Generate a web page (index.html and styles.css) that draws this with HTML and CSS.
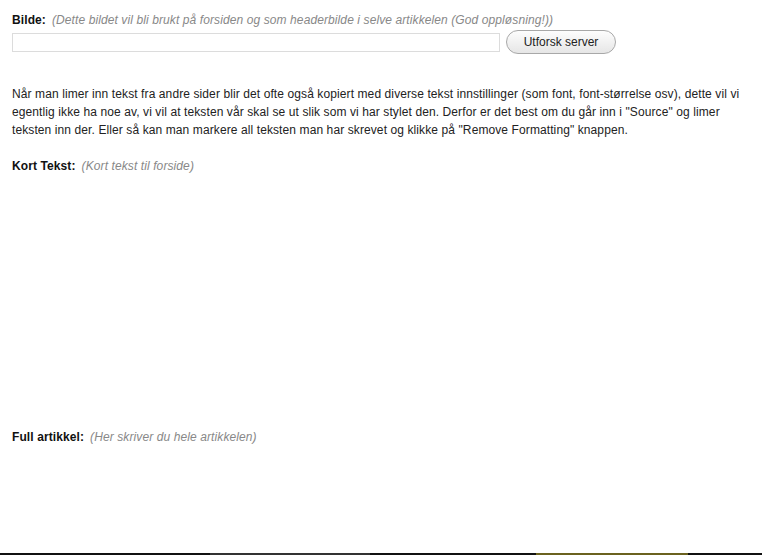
FILE: index.html
```html
<!DOCTYPE html>
<html lang="no">
<head>
  <meta charset="UTF-8" />
  <title>Ny artikkel</title>
  <link rel="stylesheet" href="styles.css">
</head>
<body>
  <form class="article-form">
    <div class="field">
      <div class="label-row">
        <span class="label">Bilde:</span>
        <span class="hint">(Dette bildet vil bli brukt på forsiden og som headerbilde i selve artikkelen (God oppløsning!))</span>
      </div>
      <div class="image-row">
        <input type="text" class="image-input" name="bilde" />
        <button type="button" class="browse-btn">Utforsk server</button>
      </div>
    </div>

    <p class="info">Når man limer inn tekst fra andre sider blir det ofte også kopiert med diverse tekst innstillinger (som font, font-størrelse osv), dette vil vi egentlig ikke ha noe av, vi vil at teksten vår skal se ut slik som vi har stylet den. Derfor er det best om du går inn i "Source" og limer teksten inn der. Eller så kan man markere all teksten man har skrevet og klikke på "Remove Formatting" knappen.</p>

    <div class="field">
      <div class="label-row">
        <span class="label">Kort Tekst:</span>
        <span class="hint">(Kort tekst til forside)</span>
      </div>
      <div class="editor editor-short"></div>
    </div>

    <div class="field">
      <div class="label-row">
        <span class="label">Full artikkel:</span>
        <span class="hint">(Her skriver du hele artikkelen)</span>
      </div>
      <div class="editor editor-full"></div>
    </div>
  </form>

  <div class="footer-bar">
    <span class="seg seg-dark" style="width: 210px"></span>
    <span class="seg seg-grey" style="width: 160px"></span>
    <span class="seg seg-dark" style="width: 166px"></span>
    <span class="seg seg-olive" style="width: 152px"></span>
    <span class="seg seg-dark" style="flex: 1"></span>
  </div>
</body>
</html>
```

FILE: styles.css
```css
* {
  box-sizing: border-box;
}
body {
  margin: 0;
  font-family: "Liberation Sans", Arial, sans-serif;
  font-size: 12px;
  line-height: 18px;
  letter-spacing: 0.1px;
  color: #222;
  background: #fff;
}
.article-form {
  padding: 11px 12px 0;
}
.label-row {
  display: flex;
  gap: 6px;
}
.label {
  font-weight: bold;
  color: #111;
}
.hint {
  font-style: italic;
  color: #888;
}
.image-row {
  display: flex;
  align-items: center;
  gap: 6px;
  margin-top: 1px;
}
.image-input {
  width: 488px;
  height: 19px;
  margin: 0;
  padding: 0 4px;
  border: 1px solid #dcdcdc;
  font: inherit;
}
.browse-btn {
  width: 110px;
  height: 24px;
  padding: 0;
  border: 1px solid #a8a8a8;
  border-radius: 12px;
  background: linear-gradient(#fdfdfd, #e6e6e6);
  color: #222;
  font: inherit;
  cursor: pointer;
}
.info {
  margin: 31px 0 18px;
}
.editor-short {
  height: 253px;
}
.editor-full {
  height: 107px;
}
.footer-bar {
  display: flex;
  height: 2px;
}
.seg-dark {
  background: #111;
}
.seg-grey {
  background: #333;
}
.seg-olive {
  background: #6b621f;
}
```
